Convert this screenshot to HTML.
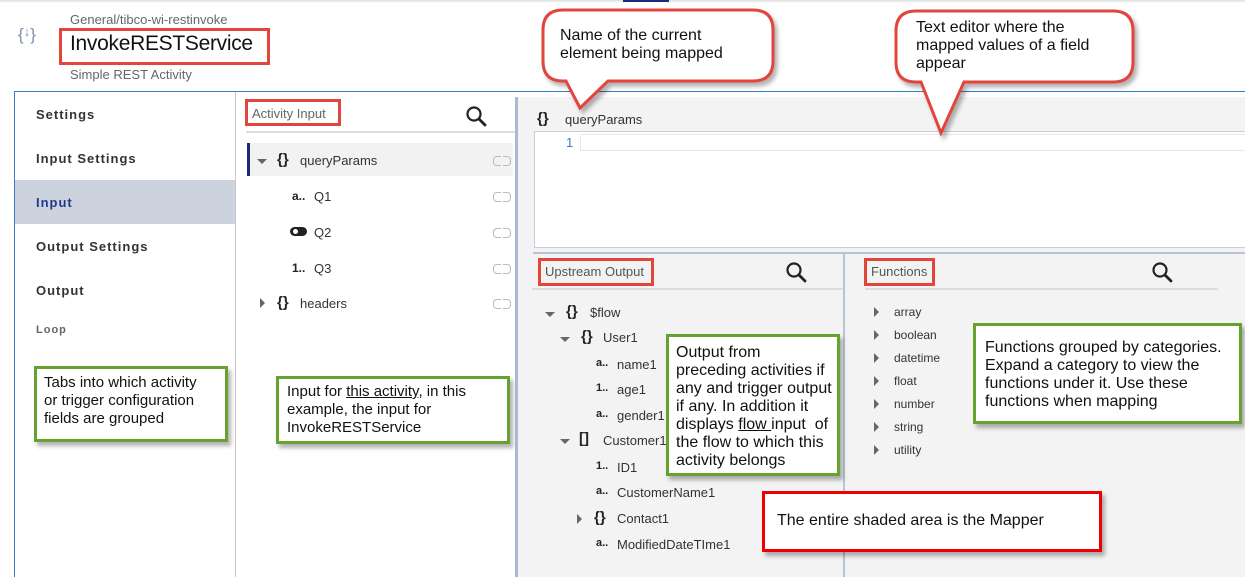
<!DOCTYPE html>
<html><head><meta charset="utf-8"><style>
*{margin:0;padding:0;box-sizing:border-box}
body{width:1245px;height:577px;overflow:hidden;background:#fff;font-family:"Liberation Sans",sans-serif;position:relative;color:#222}
.a{position:absolute;white-space:nowrap}
.nav{font-size:13px;font-weight:bold;letter-spacing:1px;color:#333;left:36px}
.gbox{position:absolute;border:3px solid #66a22d;background:#fff;box-shadow:3px 4px 4px rgba(0,0,0,.3);font-size:15px;line-height:18px;color:#111;padding:5px 8px;white-space:nowrap}
.n{font-family:"Liberation Sans Narrow","Liberation Sans",sans-serif}
.rbox{position:absolute;border:3px solid #e2453c}
.s{font-size:13px;color:#333}
.ic{font-weight:bold;font-size:13px;color:#222}
.tri{position:absolute;width:0;height:0}
.down{border-left:5px solid transparent;border-right:5px solid transparent;border-top:5px solid #666}
.right{border-top:5px solid transparent;border-bottom:5px solid transparent;border-left:5px solid #666}
.link{position:absolute;width:18px;height:8px;font-size:0}
.link:before,.link:after{content:"";position:absolute;top:0;width:7px;height:8px;border:1px solid #bbb}
.link:before{left:0;border-right:none;border-radius:4px 0 0 4px}
.link:after{right:0;border-left:none;border-radius:0 4px 4px 0}
</style></head><body>
<div class="a" style="left:0;top:0;width:1245px;height:3px;background:linear-gradient(#ddd,#fff)"></div>
<div class="a" style="left:623px;top:0;width:46px;height:2px;background:#1b2a80"></div>
<div class="a" style="left:18px;top:24px;font-size:17px;color:#7b8db0">{<span style="font-size:13px;vertical-align:4px">↓</span>}</div>
<div class="a" style="left:70px;top:12px;font-size:13px;color:#666">General/tibco-wi-restinvoke</div>
<div class="rbox" style="left:59px;top:28px;width:211px;height:37px"></div>
<div class="a" style="left:70px;top:32px;font-size:21px;color:#111;letter-spacing:-0.3px">InvokeRESTService</div>
<div class="a" style="left:70px;top:67px;font-size:13px;color:#666">Simple REST Activity</div>
<div class="a" style="left:14px;top:91px;width:1231px;height:1px;background:#3b79c9"></div>
<div class="a" style="left:14px;top:91px;width:1px;height:486px;background:#3b79c9"></div>
<div class="a" style="left:235px;top:92px;width:1px;height:485px;background:#c8c8c8"></div>
<div class="a" style="left:15px;top:180px;width:220px;height:44px;background:#cdd3de"></div>
<div class="a nav" style="top:107px">Settings</div>
<div class="a nav" style="top:151px">Input Settings</div>
<div class="a nav" style="top:195px;color:#1f3a8a">Input</div>
<div class="a nav" style="top:239px">Output Settings</div>
<div class="a nav" style="top:283px">Output</div>
<div class="a nav" style="top:324px;font-size:11px;color:#666">Loop</div>
<div class="gbox" style="left:34px;top:366px;width:194px;height:76px;padding:5px 7px">Tabs into which activity<br>or trigger configuration<br>fields are grouped</div>

<!-- activity input -->
<div class="rbox" style="left:245px;top:99px;width:96px;height:27px"></div>
<div class="a" style="left:252px;top:106px;font-size:13px;color:#666">Activity Input</div>
<svg class="a" style="left:465px;top:105px" width="22" height="22" viewBox="0 0 22 22"><circle cx="9" cy="9" r="6.5" fill="none" stroke="#222" stroke-width="2.2"/><path d="M14 14l6 6" stroke="#222" stroke-width="2.8" stroke-linecap="round"/></svg>
<div class="a" style="left:246px;top:131px;width:269px;height:2px;background:#ddd"></div>
<div class="a" style="left:247px;top:143px;width:266px;height:33px;background:#f2f2f2"></div>
<div class="a" style="left:247px;top:143px;width:3px;height:33px;background:#1b2a80"></div>
<div class="tri down" style="left:257px;top:159px"></div>
<div class="a ic" style="left:277px;top:151px;font-size:15px">{}</div><div class="a s" style="left:300px;top:153px">queryParams</div>
<div class="a" style="left:292px;top:189px;font-size:12px;font-weight:bold">a..</div><div class="a s" style="left:314px;top:189px">Q1</div>
<div class="a" style="left:290px;top:227px;width:17px;height:9px;border-radius:5px;background:#222"></div><div class="a" style="left:293px;top:229px;width:5px;height:5px;border-radius:3px;background:#fff"></div><div class="a s" style="left:314px;top:225px">Q2</div>
<div class="a" style="left:292px;top:261px;font-size:12px;font-weight:bold">1..</div><div class="a s" style="left:314px;top:261px">Q3</div>
<div class="tri right" style="left:260px;top:298px"></div>
<div class="a ic" style="left:277px;top:294px;font-size:15px">{}</div><div class="a s" style="left:300px;top:296px">headers</div>
<div class="link" style="left:493px;top:156px"></div>
<div class="link" style="left:493px;top:192px"></div>
<div class="link" style="left:493px;top:228px"></div>
<div class="link" style="left:493px;top:264px"></div>
<div class="link" style="left:493px;top:299px"></div>
<div class="gbox" style="left:276px;top:376px;width:234px;height:68px;padding:4px 8px;line-height:18px">Input for <u>this activity</u>, in this<br>example, the input for<br>InvokeRESTService</div>

<!-- mapper -->
<div class="a" style="left:515px;top:97px;width:730px;height:480px;background:#f3f3f3;border-left:3px solid #aab8d0"></div>
<div class="a ic" style="left:537px;top:110px;font-size:15px">{}</div><div class="a s" style="left:565px;top:112px">queryParams</div>
<div class="a" style="left:534px;top:131px;width:711px;height:117px;background:#fff;border:1px solid #ccd;border-right:none"></div>
<div class="a" style="left:580px;top:134px;width:665px;height:17px;border:1px solid #e8e8e8;border-right:none"></div>
<div class="a" style="left:566px;top:135px;font-size:13px;color:#3b79c9">1</div>
<div class="a" style="left:533px;top:252px;width:712px;height:2px;background:#b8c4d6"></div>
<div class="a" style="left:843px;top:253px;width:2px;height:324px;background:#b8c4d6"></div>
<div class="rbox" style="left:538px;top:258px;width:116px;height:28px"></div>
<div class="a n" style="left:545px;top:264px;font-size:13px;color:#555">Upstream Output</div>
<svg class="a" style="left:785px;top:261px" width="22" height="22" viewBox="0 0 22 22"><circle cx="9" cy="9" r="6.5" fill="none" stroke="#222" stroke-width="2.2"/><path d="M14 14l6 6" stroke="#222" stroke-width="2.8" stroke-linecap="round"/></svg>
<div class="a" style="left:532px;top:288px;width:311px;height:2px;background:#ddd"></div>
<div class="rbox" style="left:864px;top:258px;width:71px;height:28px"></div>
<div class="a" style="left:871px;top:264px;font-size:13px;color:#555">Functions</div>
<svg class="a" style="left:1151px;top:261px" width="22" height="22" viewBox="0 0 22 22"><circle cx="9" cy="9" r="6.5" fill="none" stroke="#222" stroke-width="2.2"/><path d="M14 14l6 6" stroke="#222" stroke-width="2.8" stroke-linecap="round"/></svg>
<div class="a" style="left:865px;top:288px;width:353px;height:2px;background:#ddd"></div>

<div class="tri down" style="left:545px;top:312px"></div><div class="a ic" style="left:566px;top:303px;font-size:15px">{}</div><div class="a s n" style="left:590px;top:305px">$flow</div>
<div class="tri down" style="left:560px;top:337px"></div><div class="a ic" style="left:581px;top:328px;font-size:15px">{}</div><div class="a s n" style="left:603px;top:330px">User1</div>
<div class="a" style="left:596px;top:357px;font-size:11px;font-weight:bold">a..</div><div class="a s n" style="left:617px;top:357px">name1</div>
<div class="a" style="left:596px;top:382px;font-size:11px;font-weight:bold">1..</div><div class="a s n" style="left:617px;top:382px">age1</div>
<div class="a" style="left:596px;top:408px;font-size:11px;font-weight:bold">a..</div><div class="a s n" style="left:617px;top:408px">gender1</div>
<div class="tri down" style="left:560px;top:439px"></div><div class="a ic" style="left:579px;top:430px;font-size:15px">[]</div><div class="a s n" style="left:603px;top:433px">Customer1</div>
<div class="a" style="left:596px;top:460px;font-size:11px;font-weight:bold">1..</div><div class="a s n" style="left:617px;top:460px">ID1</div>
<div class="a" style="left:596px;top:485px;font-size:11px;font-weight:bold">a..</div><div class="a s n" style="left:617px;top:485px">CustomerName1</div>
<div class="tri right" style="left:577px;top:514px"></div><div class="a ic" style="left:594px;top:509px;font-size:15px">{}</div><div class="a s n" style="left:617px;top:511px">Contact1</div>
<div class="a" style="left:596px;top:537px;font-size:11px;font-weight:bold">a..</div><div class="a s n" style="left:617px;top:537px">ModifiedDateTIme1</div>

<div class="tri right" style="left:874px;top:307px"></div><div class="a s" style="left:894px;top:305px;font-size:12px">array</div>
<div class="tri right" style="left:874px;top:330px"></div><div class="a s" style="left:894px;top:328px;font-size:12px">boolean</div>
<div class="tri right" style="left:874px;top:353px"></div><div class="a s" style="left:894px;top:351px;font-size:12px">datetime</div>
<div class="tri right" style="left:874px;top:376px"></div><div class="a s" style="left:894px;top:374px;font-size:12px">float</div>
<div class="tri right" style="left:874px;top:399px"></div><div class="a s" style="left:894px;top:397px;font-size:12px">number</div>
<div class="tri right" style="left:874px;top:422px"></div><div class="a s" style="left:894px;top:420px;font-size:12px">string</div>
<div class="tri right" style="left:874px;top:445px"></div><div class="a s" style="left:894px;top:443px;font-size:12px">utility</div>

<div class="gbox n" style="left:666px;top:334px;width:174px;height:142px;font-size:16px;line-height:18px;padding:7px 7px">Output from<br>preceding activities if<br>any and trigger output<br>if any. In addition it<br>displays <u>flow </u>input&nbsp; of<br>the flow to which this<br>activity belongs</div>
<div class="gbox n" style="left:973px;top:323px;width:269px;height:101px;font-size:16px;padding:13px 9px">Functions grouped by categories.<br>Expand a category to view the<br>functions under it. Use these<br>functions when mapping</div>
<div class="a" style="left:762px;top:491px;width:340px;height:61px;background:#fff;border:3px solid #e00;box-shadow:3px 4px 4px rgba(0,0,0,.3)"></div>
<div class="a n" style="left:777px;top:512px;font-size:16px;color:#111">The entire shaded area is the Mapper</div>

<svg class="a" style="left:0;top:0;overflow:visible" width="1245" height="577">
<defs><filter id="sh"><feDropShadow dx="3" dy="4" stdDeviation="2" flood-opacity="0.3"/></filter></defs>
<path filter="url(#sh)" d="M563 10 H753 Q773 10 773 30 V61 Q773 81 753 81 H608 L580 108 L566 81 H563 Q543 81 543 61 V30 Q543 10 563 10 Z" fill="#fff" stroke="#e2453c" stroke-width="3"/>
<path filter="url(#sh)" d="M916 11 H1113 Q1133 11 1133 31 V62 Q1133 82 1113 82 H964 L941 133 L921 82 H916 Q896 82 896 62 V31 Q896 11 916 11 Z" fill="#fff" stroke="#e2453c" stroke-width="3"/>
</svg>
<div class="a n" style="left:560px;top:27px;font-size:16px;line-height:18px;color:#111">Name of the current<br>element being mapped</div>
<div class="a n" style="left:916px;top:19px;font-size:16px;line-height:18px;color:#111">Text editor where the<br>mapped values of a field<br>appear</div>
</body></html>
